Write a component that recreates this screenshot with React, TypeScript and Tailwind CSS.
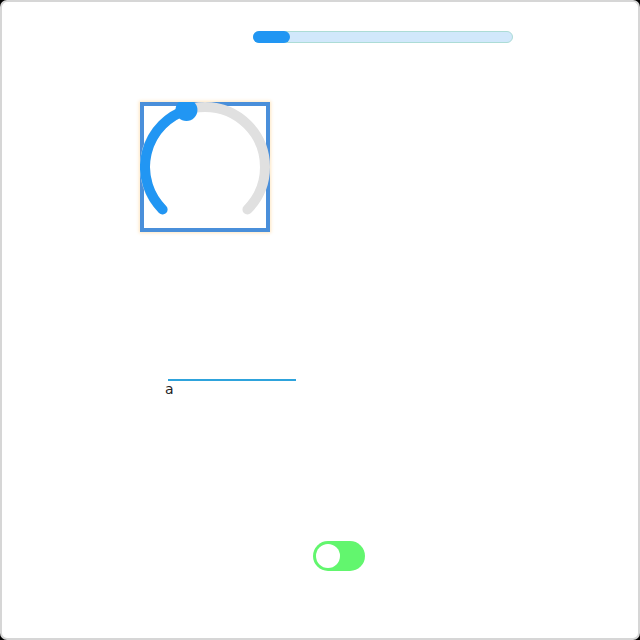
import React from "react";

function Knob() {
  const cx = 65, cy = 65, r = 60;
  const pt = (deg: number) => {
    const a = (deg * Math.PI) / 180;
    return [cx + r * Math.sin(a), cy - r * Math.cos(a)];
  };
  const arc = (a0: number, a1: number) => {
    const [x0, y0] = pt(a0);
    const [x1, y1] = pt(a1);
    const large = a1 - a0 > 180 ? 1 : 0;
    return `M ${x0} ${y0} A ${r} ${r} 0 ${large} 1 ${x1} ${y1}`;
  };
  const thumb = -18;
  const [tx, ty] = pt(thumb);
  return (
    <div className="relative w-[130px] h-[130px] border-4 border-[#4a8fda] bg-white shadow-[0_0_3px_1px_rgba(255,200,120,0.45)]">
      <svg className="absolute left-[-4px] top-[-4px]" width="130" height="130" viewBox="0 0 130 130">
        <path d={arc(-135, 135)} fill="none" stroke="#e0e0e0" strokeWidth="10" strokeLinecap="round" />
        <path d={arc(-135, thumb)} fill="none" stroke="#2196f3" strokeWidth="10" strokeLinecap="round" />
        <circle cx={tx} cy={ty} r="11" fill="#2196f3" />
      </svg>
    </div>
  );
}

export default function App() {
  return (
    <div className="w-[640px] h-[640px] bg-black">
      <div className="w-full h-full rounded-[7px] border-2 border-[#d6d6d6] bg-white flex flex-col">
        <div className="mt-[29px] ml-[251px] w-[260px] h-[12px] rounded-full bg-[#d1e8fb] border border-[#acdcd6]">
          <div className="w-[37px] h-[12px] rounded-full bg-[#2196f3] -mt-px -ml-px" />
        </div>
        <div className="mt-[59px] ml-[138px]">
          <Knob />
        </div>
        <div className="mt-[147px] ml-[166px] w-[128px] h-[2px] bg-[#2ea3dc]" />
        <div className="ml-[163px] mt-0 text-[14px] leading-[17px] text-[#222] font-['DejaVu_Sans',sans-serif]">a</div>
        <div className="mt-[143px] ml-[311px] w-[52px] h-[30px] rounded-full bg-[#62f66e] flex items-center px-[3px]">
          <div className="w-[24px] h-[24px] rounded-full bg-white" />
        </div>
      </div>
    </div>
  );
}
